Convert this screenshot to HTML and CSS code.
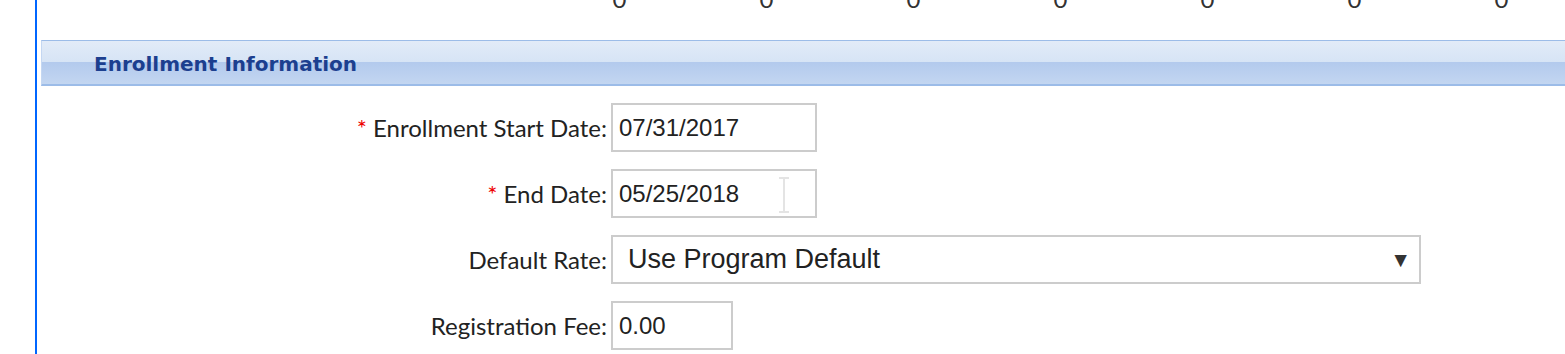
FILE: index.html
```html
<!DOCTYPE html>
<html lang="en">
<head>
  <meta charset="UTF-8">
  <title>Enrollment</title>
  <link rel="stylesheet" href="styles.css">
</head>
<body>
  <div class="page">
    <!-- totals row, scrolled mostly out of view -->
    <div class="totals">
      <span>0</span><span>0</span><span>0</span><span>0</span><span>0</span><span>0</span><span>0</span>
    </div>

    <div class="section-head">Enrollment Information</div>

    <div class="form">
      <div class="row">
        <label class="lbl"><span class="req">*</span> Enrollment Start Date:</label>
        <input type="text" class="field field-date" value="07/31/2017">
      </div>
      <div class="row">
        <label class="lbl"><span class="req">*</span> End Date:</label>
        <div class="field-wrap">
          <input type="text" class="field field-date" value="05/25/2018">
          <svg class="ibeam" width="12" height="36" viewBox="0 0 12 36">
            <path d="M1 1h10M1 35h10M6 1v34" stroke="#e4e4e4" stroke-width="2" fill="none"/>
          </svg>
        </div>
      </div>
      <div class="row">
        <label class="lbl">Default Rate:</label>
        <div class="select">
          <span>Use Program Default</span>
          <span class="arrow">&#9660;</span>
        </div>
      </div>
      <div class="row">
        <label class="lbl">Registration Fee:</label>
        <input type="text" class="field field-fee" value="0.00">
      </div>
    </div>
  </div>
</body>
</html>
```

FILE: styles.css
```css
body {
  margin: 0;
  background: #fff;
  font-family: Lato, "Open Sans", sans-serif;
  color: #222;
}
.page {
  margin-left: 35px;
  border-left: 2px solid #0066ff;
  height: 354px;
  overflow: hidden;
  padding-left: 4px;
}
.totals {
  display: grid;
  grid-template-columns: repeat(7, 147px);
  margin-left: 505px;
  height: 32px;
  margin-top: -17px;
  font-size: 24px;
  line-height: 32px;
  color: #333;
}
.totals span {
  text-align: center;
}
.section-head {
  height: 40px;
  padding-top: 3px;
  margin-top: 25px;
  border-top: 1px solid #9cbce8;
  border-bottom: 2px solid #9cbce8;
  border-left: 1px solid #c4d7f2;
  background: linear-gradient(#e2ebf8, #d6e4f5 50%, #b3caed 50%, #c3d6f1);
  padding-left: 52px;
  font-family: "DejaVu Sans", Verdana, sans-serif;
  font-weight: bold;
  font-size: 20px;
  line-height: 40px;
  color: #1c3f8f;
}
.form {
  padding-top: 17px;
  display: flex;
  flex-direction: column;
  gap: 17px;
}
.row {
  display: flex;
  align-items: center;
  height: 49px;
}
.lbl {
  width: 566px;
  text-align: right;
  font-size: 24px;
  padding-right: 4px;
  color: #222;
}
.req {
  color: #e00;
}
.field {
  box-sizing: border-box;
  height: 49px;
  border: 2px solid #ccc;
  padding: 0 6px;
  font-family: "Liberation Sans", Arial, sans-serif;
  font-size: 24px;
  color: #222;
  outline: none;
}
.field-date {
  width: 206px;
}
.field-fee {
  width: 122px;
}
.field-wrap {
  position: relative;
  height: 49px;
}
.ibeam {
  position: absolute;
  left: 167px;
  top: 8px;
}
.select {
  box-sizing: border-box;
  width: 810px;
  height: 49px;
  border: 2px solid #ccc;
  display: flex;
  align-items: center;
  justify-content: space-between;
  padding: 0 8px 0 15px;
  font-family: "Liberation Sans", Arial, sans-serif;
  font-size: 27px;
  color: #222;
}
.arrow {
  font-size: 21px;
  color: #333;
}
```
